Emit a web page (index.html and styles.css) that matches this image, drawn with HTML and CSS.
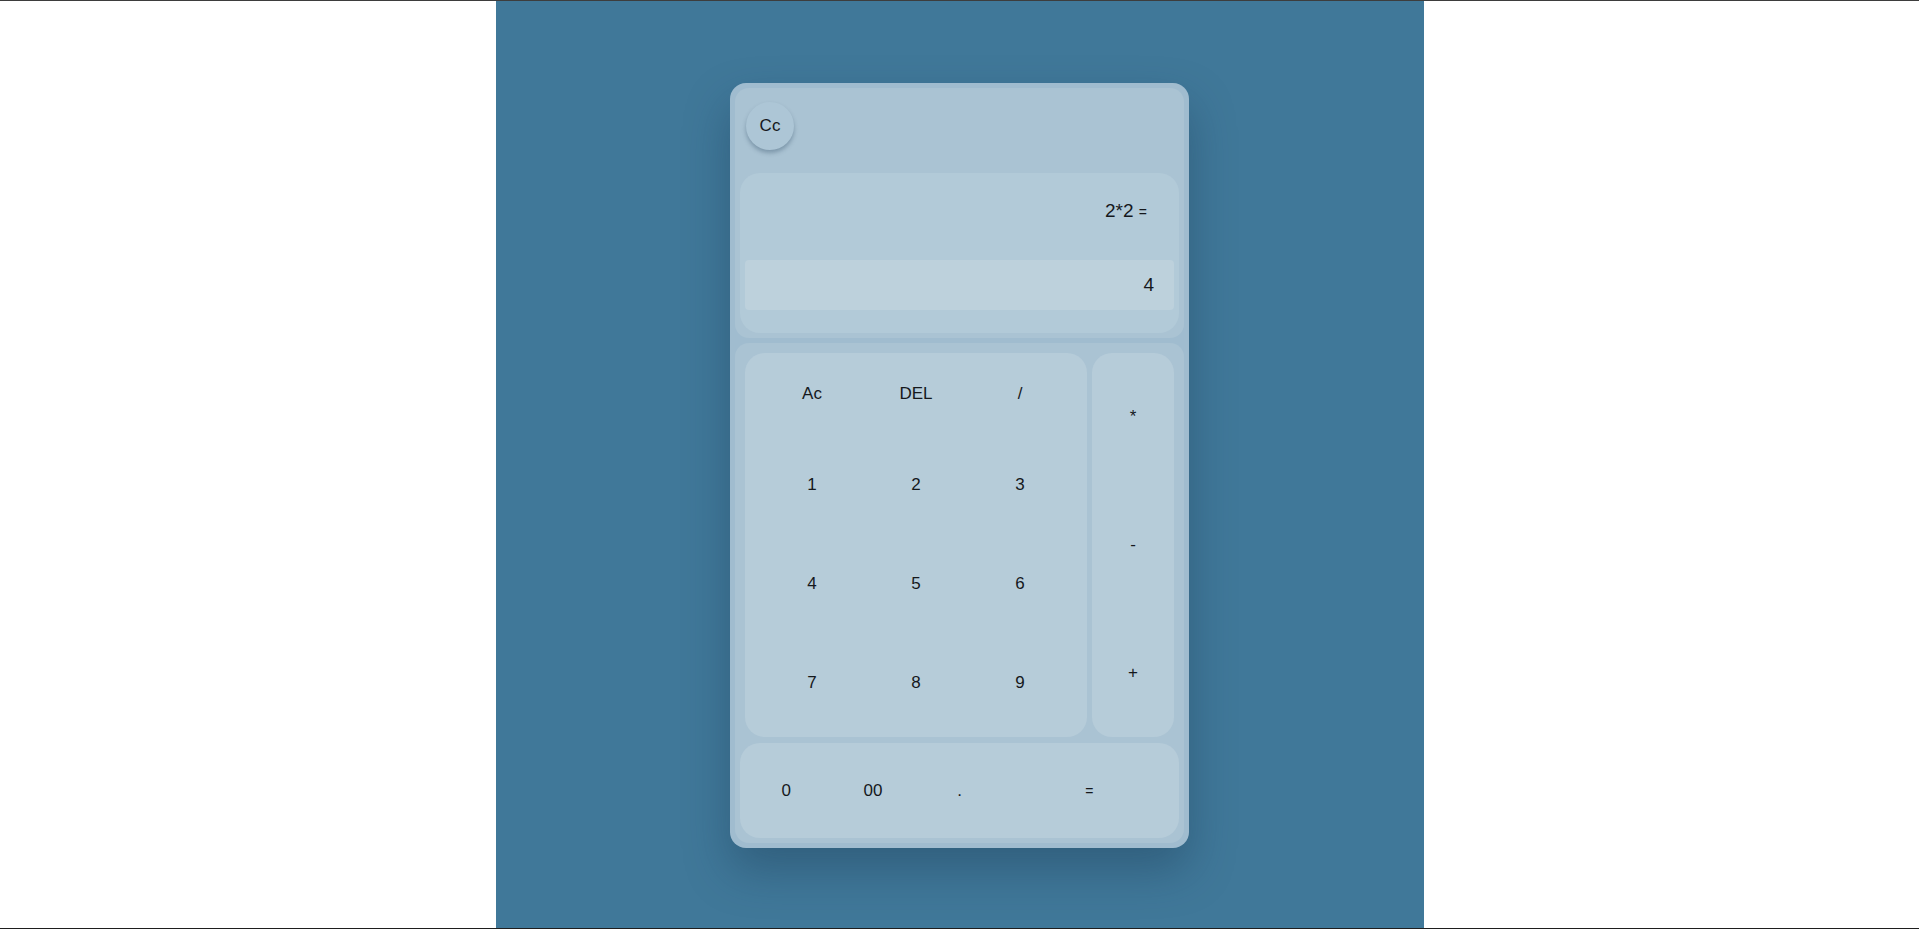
FILE: index.html
```html
<!DOCTYPE html>
<html lang="en">
<head>
<meta charset="utf-8">
<title>Calculator</title>
<link rel="stylesheet" href="styles.css">
</head>
<body>
<div class="stage">
  <div class="calc">
    <section class="top">
      <div class="header">
        <button class="theme-btn">Cc</button>
      </div>
      <div class="display">
        <div class="expr">2*2 <span class="eq">=</span></div>
        <div class="result">4</div>
      </div>
    </section>
    <section class="lower">
      <div class="keys-row">
        <div class="keypad">
          <button class="key">Ac</button>
          <button class="key">DEL</button>
          <button class="key">/</button>
          <button class="key">1</button>
          <button class="key">2</button>
          <button class="key">3</button>
          <button class="key">4</button>
          <button class="key">5</button>
          <button class="key">6</button>
          <button class="key">7</button>
          <button class="key">8</button>
          <button class="key">9</button>
        </div>
        <div class="ops">
          <button class="key">*</button>
          <button class="key">-</button>
          <button class="key">+</button>
        </div>
      </div>
      <div class="bottom">
        <button class="key">0</button>
        <button class="key">00</button>
        <button class="key">.</button>
        <button class="key small">=</button>
      </div>
    </section>
  </div>
</div>
</body>
</html>
```

FILE: styles.css
```css
* { box-sizing: border-box; }

html, body {
  margin: 0;
  padding: 0;
}

body {
  background: #ffffff;
  border-top: 1px solid #3d3d3d;
  border-bottom: 1px solid #1e1e1e;
  height: 929px;
  font-family: "Liberation Sans", "DejaVu Sans", sans-serif;
  color: #15181c;
}

.stage {
  width: 928px;
  height: 927px;
  margin: 0 auto;
  background: #407899;
  padding-top: 82px;
}

.calc {
  width: 459px;
  margin: 0 auto;
  background: #a0bccf;
  border-radius: 16px;
  padding: 5px;
  display: flex;
  flex-direction: column;
  gap: 5px;
  box-shadow: 0 22px 45px rgba(20, 50, 75, 0.35);
}

button {
  font-family: inherit;
  color: inherit;
  background: none;
  border: none;
  padding: 0;
  cursor: pointer;
}

.top {
  background: #aac3d3;
  border-radius: 14px;
  height: 250px;
  padding: 0 5px 5px;
  display: flex;
  flex-direction: column;
}

.header {
  height: 85px;
  padding: 14px 0 0 6px;
}

.theme-btn {
  width: 48px;
  height: 48px;
  border-radius: 50%;
  background: #adc6d6;
  box-shadow: 0 3px 4px rgba(40, 70, 95, 0.35);
  font-size: 17px;
  color: #15181c;
}

.display {
  height: 160px;
  background: #b2cad8;
  border-radius: 20px;
  padding: 0 5px;
}

.expr {
  height: 87px;
  padding-top: 26px;
  line-height: 24px;
  text-align: right;
  padding-right: 27px;
  font-size: 19px;
}

.expr .eq {
  font-size: 14px;
}

.result {
  height: 50px;
  line-height: 50px;
  background: #bdd1dc;
  border-radius: 4px;
  text-align: right;
  padding-right: 20px;
  font-size: 19px;
}

.lower {
  background: #aac3d3;
  border-radius: 14px;
  height: 500px;
  padding: 10px 10px 5px;
  display: flex;
  flex-direction: column;
}

.keys-row {
  height: 384px;
  display: flex;
  gap: 5px;
}

.keypad {
  width: 342px;
  background: #b6ccd9;
  border-radius: 20px;
  display: grid;
  grid-template-columns: repeat(3, 104px);
  grid-template-rows: 82px repeat(3, 99px);
  padding-left: 15px;
}

.ops {
  flex: 1;
  background: #b6ccd9;
  border-radius: 20px;
  display: flex;
  flex-direction: column;
}

.ops .key {
  flex: 1;
}

.key {
  font-size: 17px;
  display: flex;
  align-items: center;
  justify-content: center;
}

.bottom {
  margin: 6px -5px 0;
  height: 95px;
  background: #b6ccd9;
  border-radius: 20px;
  padding: 0 3px;
  display: grid;
  grid-template-columns: 1fr 1fr 1fr 2fr;
}

.bottom .small {
  font-size: 14px;
}
```
